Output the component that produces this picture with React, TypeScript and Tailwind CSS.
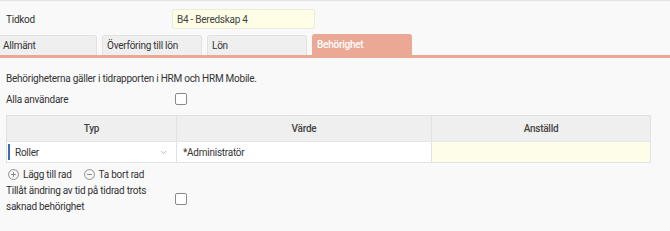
import { ChevronDown } from 'lucide-react';

function Checkbox() {
  return <div className="w-[12px] h-[12px] border border-[#8a8a8a] rounded-[2px] bg-white" />;
}

function CircleIcon({ minus }: { minus?: boolean }) {
  return (
    <svg width="11" height="11" viewBox="0 0 12 12" className="flex-shrink-0">
      <circle cx="6" cy="6" r="5.4" fill="none" stroke="#777" strokeWidth="0.9" />
      <path d="M3.3 6h5.4" stroke="#777" strokeWidth="0.9" />
      {!minus && <path d="M6 3.3v5.4" stroke="#777" strokeWidth="0.9" />}
    </svg>
  );
}

export default function App() {
  const tabs = ['Allmänt', 'Överföring till lön', 'Lön'];

  return (
    <div
      className="w-[670px] h-[231px] bg-[#f9f9f9] border-t border-[#e3e3e3] text-[10px] tracking-[-0.25px] text-[#333] overflow-hidden"
      style={{ fontFamily: 'Roboto, "Liberation Sans", sans-serif' }}
    >
      {/* Tidkod */}
      <div className="flex items-center h-[29px] pt-[7px] px-[6px]">
        <span className="w-[166px]">Tidkod</span>
        <div className="w-[143px] h-[20px] bg-[#fefee6] border border-[#ebebdc] rounded-[2px] flex items-center px-[4px] text-[#444]">
          B4 - Beredskap 4
        </div>
      </div>

      {/* Tabs */}
      <div className="flex items-end gap-[5px] h-[28px] border-b-[3px] border-[#eba894]">
        {tabs.map((t, i) => (
          <div
            key={t}
            className={`h-[20px] bg-[#efefef] border border-b-0 border-[#e2e2e2] rounded-t-[3px] flex items-center px-[3px] ${
              i === 0 ? 'w-[97px] border-l-0 rounded-tl-none' : 'w-[100px] pl-[4px]'
            }`}
          >
            {t}
          </div>
        ))}
        <div className="w-[100px] h-[21px] bg-[#eba894] rounded-t-[3px] flex items-center px-[5px] text-white font-medium">
          Behörighet
        </div>
      </div>

      <div className="px-[6px]">
        <div className="mt-[13px] h-[14px] flex items-center">
          Behörigheterna gäller i tidrapporten i HRM och HRM Mobile.
        </div>

        <div className="flex items-center mt-[7px] h-[14px]">
          <span className="w-[169px]">Alla användare</span>
          <Checkbox />
        </div>

        {/* Table */}
        <div className="mt-[9px] w-[645px] border border-[#e2e2e2]">
          <div className="flex h-[25px] bg-[#efefef] text-[#444] font-medium">
            <div className="w-[170px] flex items-center justify-center border-r border-[#e2e2e2]">Typ</div>
            <div className="w-[255px] flex items-center justify-center border-r border-[#e2e2e2]">Värde</div>
            <div className="flex-1 flex items-center justify-center">Anställd</div>
          </div>
          <div className="flex h-[21px] border-t border-[#e6e6e6]">
            <div className="w-[170px] bg-white flex items-center border-r border-[#e2e2e2] py-[2px] pl-[1px]">
              <div className="w-[2px] h-full bg-[#3d6eb4]" />
              <span className="ml-[5px] flex-1">Roller</span>
              <ChevronDown className="w-[9px] h-[9px] mr-[8px] text-[#888]" strokeWidth={1.5} />
            </div>
            <div className="w-[255px] bg-white flex items-center border-r border-[#e2e2e2] px-[6px]">
              *Administratör
            </div>
            <div className="flex-1 bg-[#fdfde9]" />
          </div>
        </div>

        <div className="flex items-center mt-[4px] h-[14px] gap-[4px] pl-[2px]">
          <CircleIcon />
          <span>Lägg till rad</span>
          <span className="w-[4px]" />
          <CircleIcon minus />
          <span>Ta bort rad</span>
        </div>

        <div className="flex items-center mt-[2px]">
          <span className="w-[169px] leading-[16px]">
            Tillåt ändring av tid på tidrad trots
            <br />
            saknad behörighet
          </span>
          <Checkbox />
        </div>
      </div>
    </div>
  );
}
